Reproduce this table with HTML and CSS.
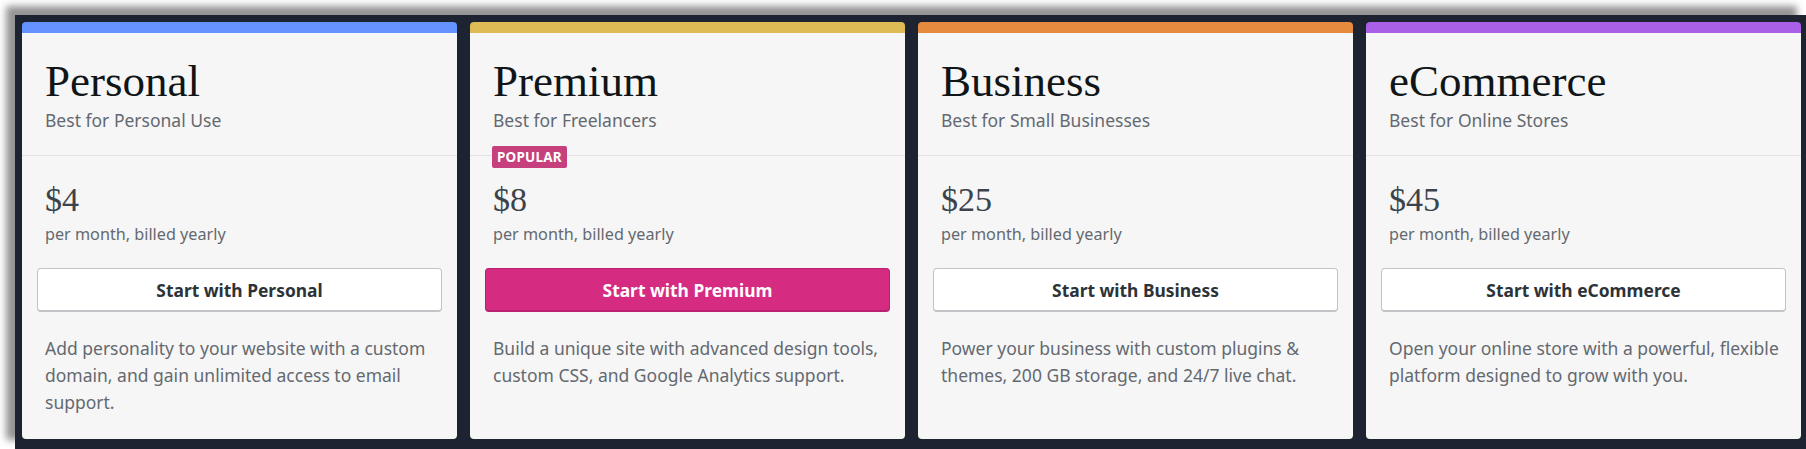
FILE: index.html
```html
<!DOCTYPE html>
<html lang="en">
<head>
<meta charset="utf-8">
<title>Plans</title>
<link rel="stylesheet" href="styles.css">
</head>
<body>
<div class="frame">
  <div class="plans">
    <section class="plan plan-personal">
      <header class="plan-head">
        <h2 class="plan-name">Personal</h2>
        <p class="plan-tagline">Best for Personal Use</p>
      </header>
      <div class="plan-body">
        <div class="plan-price">$4</div>
        <div class="plan-term">per month, billed yearly</div>
        <button class="plan-btn">Start with Personal</button>
        <p class="plan-desc">Add personality to your website with a custom domain, and gain unlimited access to email support.</p>
      </div>
    </section>
    <section class="plan plan-premium">
      <header class="plan-head">
        <h2 class="plan-name">Premium</h2>
        <p class="plan-tagline">Best for Freelancers</p>
        <span class="badge">POPULAR</span>
      </header>
      <div class="plan-body">
        <div class="plan-price">$8</div>
        <div class="plan-term">per month, billed yearly</div>
        <button class="plan-btn plan-btn-primary">Start with Premium</button>
        <p class="plan-desc">Build a unique site with advanced design tools, custom CSS, and Google Analytics support.</p>
      </div>
    </section>
    <section class="plan plan-business">
      <header class="plan-head">
        <h2 class="plan-name">Business</h2>
        <p class="plan-tagline">Best for Small Businesses</p>
      </header>
      <div class="plan-body">
        <div class="plan-price">$25</div>
        <div class="plan-term">per month, billed yearly</div>
        <button class="plan-btn">Start with Business</button>
        <p class="plan-desc">Power your business with custom plugins &amp; themes, 200 GB storage, and 24/7 live chat.</p>
      </div>
    </section>
    <section class="plan plan-ecommerce">
      <header class="plan-head">
        <h2 class="plan-name">eCommerce</h2>
        <p class="plan-tagline">Best for Online Stores</p>
      </header>
      <div class="plan-body">
        <div class="plan-price">$45</div>
        <div class="plan-term">per month, billed yearly</div>
        <button class="plan-btn">Start with eCommerce</button>
        <p class="plan-desc">Open your online store with a powerful, flexible platform designed to grow with you.</p>
      </div>
    </section>
  </div>
</div>
</body>
</html>
```

FILE: styles.css
```css
html, body {
  margin: 0;
  padding: 0;
  background: #ffffff;
  overflow: hidden;
}

.frame {
  margin: 15px 0 0 15px;
  width: 1791px;
  box-sizing: border-box;
  padding: 7px 5px 10px 7px;
  background: #1d2330;
  box-shadow: -9px -9px 7px rgba(0, 0, 0, 0.42);
}

.plans {
  display: grid;
  grid-template-columns: repeat(4, 435px);
  column-gap: 13px;
}

.plan {
  background: #f6f6f6;
  border-radius: 4px;
  border-top: 11px solid #6493ff;
  display: flex;
  flex-direction: column;
  font-family: "Noto Sans", "Open Sans", sans-serif;
}

.plan-personal { border-top-color: #6493ff; }
.plan-premium { border-top-color: #dfbb55; }
.plan-business { border-top-color: #e68a3f; }
.plan-ecommerce { border-top-color: #a95fe6; }

.plan-head {
  position: relative;
  padding: 22px 23px 22px;
  border-bottom: 1px solid #e2e2e2;
}

.plan-name {
  margin: 0;
  font-family: "Liberation Serif", "DejaVu Serif", serif;
  font-weight: 400;
  font-size: 45px;
  line-height: 52px;
  color: #101517;
}

.plan-tagline {
  margin: 0;
  font-size: 17.5px;
  line-height: 26px;
  color: #646970;
}

.badge {
  position: absolute;
  left: 22px;
  bottom: -13px;
  background: #c5407c;
  color: #ffffff;
  font-weight: 700;
  font-size: 13.5px;
  line-height: 22px;
  padding: 0 5px;
  border-radius: 2px;
  letter-spacing: 0.2px;
}

.plan-body {
  padding: 24px 15px 23px;
  display: flex;
  flex-direction: column;
}

.plan-price {
  padding: 0 8px;
  font-family: "Liberation Serif", "DejaVu Serif", serif;
  font-size: 34px;
  line-height: 40px;
  color: #3c434a;
}

.plan-term {
  padding: 0 8px;
  margin-top: 2px;
  font-size: 16.2px;
  line-height: 24px;
  color: #646970;
}

.plan-btn {
  margin-top: 22px;
  height: 44px;
  border: 1px solid #c3c4c7;
  border-bottom-width: 2px;
  border-radius: 4px;
  background: #ffffff;
  font-family: "Noto Sans", "Open Sans", sans-serif;
  font-weight: 700;
  font-size: 17.4px;
  color: #2c3338;
  padding: 0;
}

.plan-btn-primary {
  background: #d52c82;
  border-color: #b9216f;
  color: #ffffff;
}

.plan-desc {
  margin: 23px -6px 0 0;
  padding: 0 0 0 8px;
  font-size: 17.5px;
  line-height: 27px;
  color: #646970;
}
```
